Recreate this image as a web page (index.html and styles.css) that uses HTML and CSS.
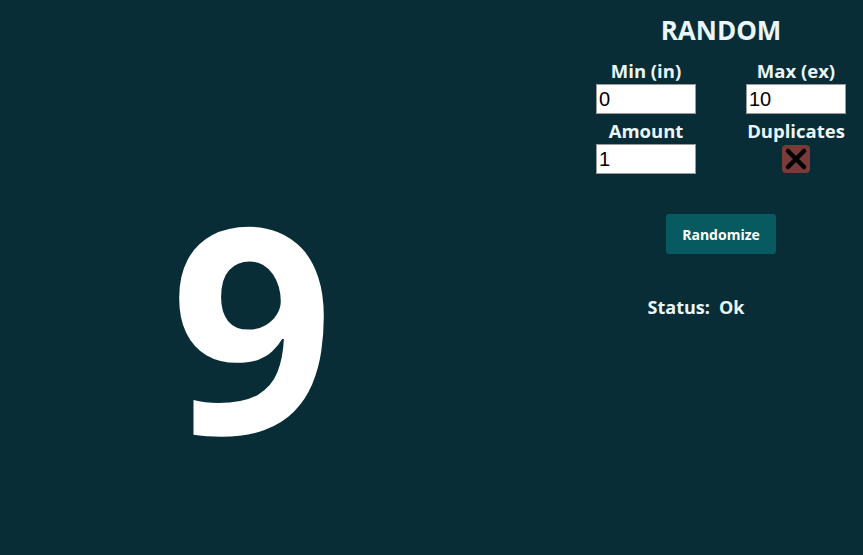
FILE: index.html
```html
<!DOCTYPE html>
<html>
<head>
<meta charset="utf-8">
<link rel="stylesheet" href="styles.css">
</head>
<body>
<div class="app">
  <div class="display"><span class="number">9</span></div>
  <div class="panel">
    <h1 class="title">RANDOM</h1>
    <div class="fields">
      <div class="field">
        <label class="label">Min (in)</label>
        <input class="input" type="text" value="0">
      </div>
      <div class="field">
        <label class="label">Max (ex)</label>
        <input class="input" type="text" value="10">
      </div>
      <div class="field">
        <label class="label">Amount</label>
        <input class="input" type="text" value="1">
      </div>
      <div class="field">
        <label class="label">Duplicates</label>
        <span class="check">
          <svg width="28" height="28" viewBox="0 0 28 28">
            <path d="M6 6 L22 22 M22 6 L6 22" stroke="#000" stroke-width="4.5" stroke-linecap="round"/>
          </svg>
        </span>
      </div>
    </div>
    <button class="btn">Randomize</button>
    <div class="status"><span>Status:</span><span>Ok</span></div>
  </div>
</div>
</body>
</html>
```

FILE: styles.css
```css
html, body {
  margin: 0;
  padding: 0;
  height: 100%;
}
body {
  background: #082d36;
  font-family: "Open Sans", "Noto Sans", sans-serif;
  color: #eaf6fa;
}
.app {
  display: flex;
  height: 555px;
}
.display {
  width: 504px;
  display: flex;
  justify-content: center;
  padding-top: 179px;
  box-sizing: border-box;
}
.number {
  font-size: 287px;
  font-weight: 700;
  line-height: 1;
  color: #ffffff;
}
.panel {
  margin-left: auto;
  width: 284px;
  display: flex;
  flex-direction: column;
  align-items: center;
}
.title {
  margin: 12px 0 0;
  font-size: 26px;
  font-weight: 700;
  line-height: 36px;
}
.fields {
  display: grid;
  grid-template-columns: 100px 100px;
  column-gap: 50px;
  row-gap: 3px;
  margin-top: 9px;
}
.field {
  display: flex;
  flex-direction: column;
  align-items: center;
}
.label {
  font-size: 18.5px;
  font-weight: 700;
  line-height: 27px;
}
.input {
  width: 100px;
  height: 30px;
  box-sizing: border-box;
  border: 1px solid #9a9a9a;
  background: #fff;
  font-family: "Liberation Sans", Arial, sans-serif;
  font-size: 20px;
  padding: 2px 2px;
  color: #000;
  margin: 0;
}
.check {
  width: 28px;
  height: 28px;
  margin-top: 1px;
  background: #7a3a38;
  border-radius: 4px;
  display: block;
}
.check svg { display: block; }
.btn {
  margin-top: 40px;
  width: 110px;
  height: 40px;
  background: #065a60;
  border: none;
  border-radius: 3px;
  color: #fff;
  font-family: "Open Sans", "Noto Sans", sans-serif;
  font-weight: 700;
  font-size: 14px;
}
.status {
  margin-top: 41px;
  margin-right: 50px;
  display: flex;
  gap: 9px;
  font-size: 18px;
  font-weight: 700;
}
```
